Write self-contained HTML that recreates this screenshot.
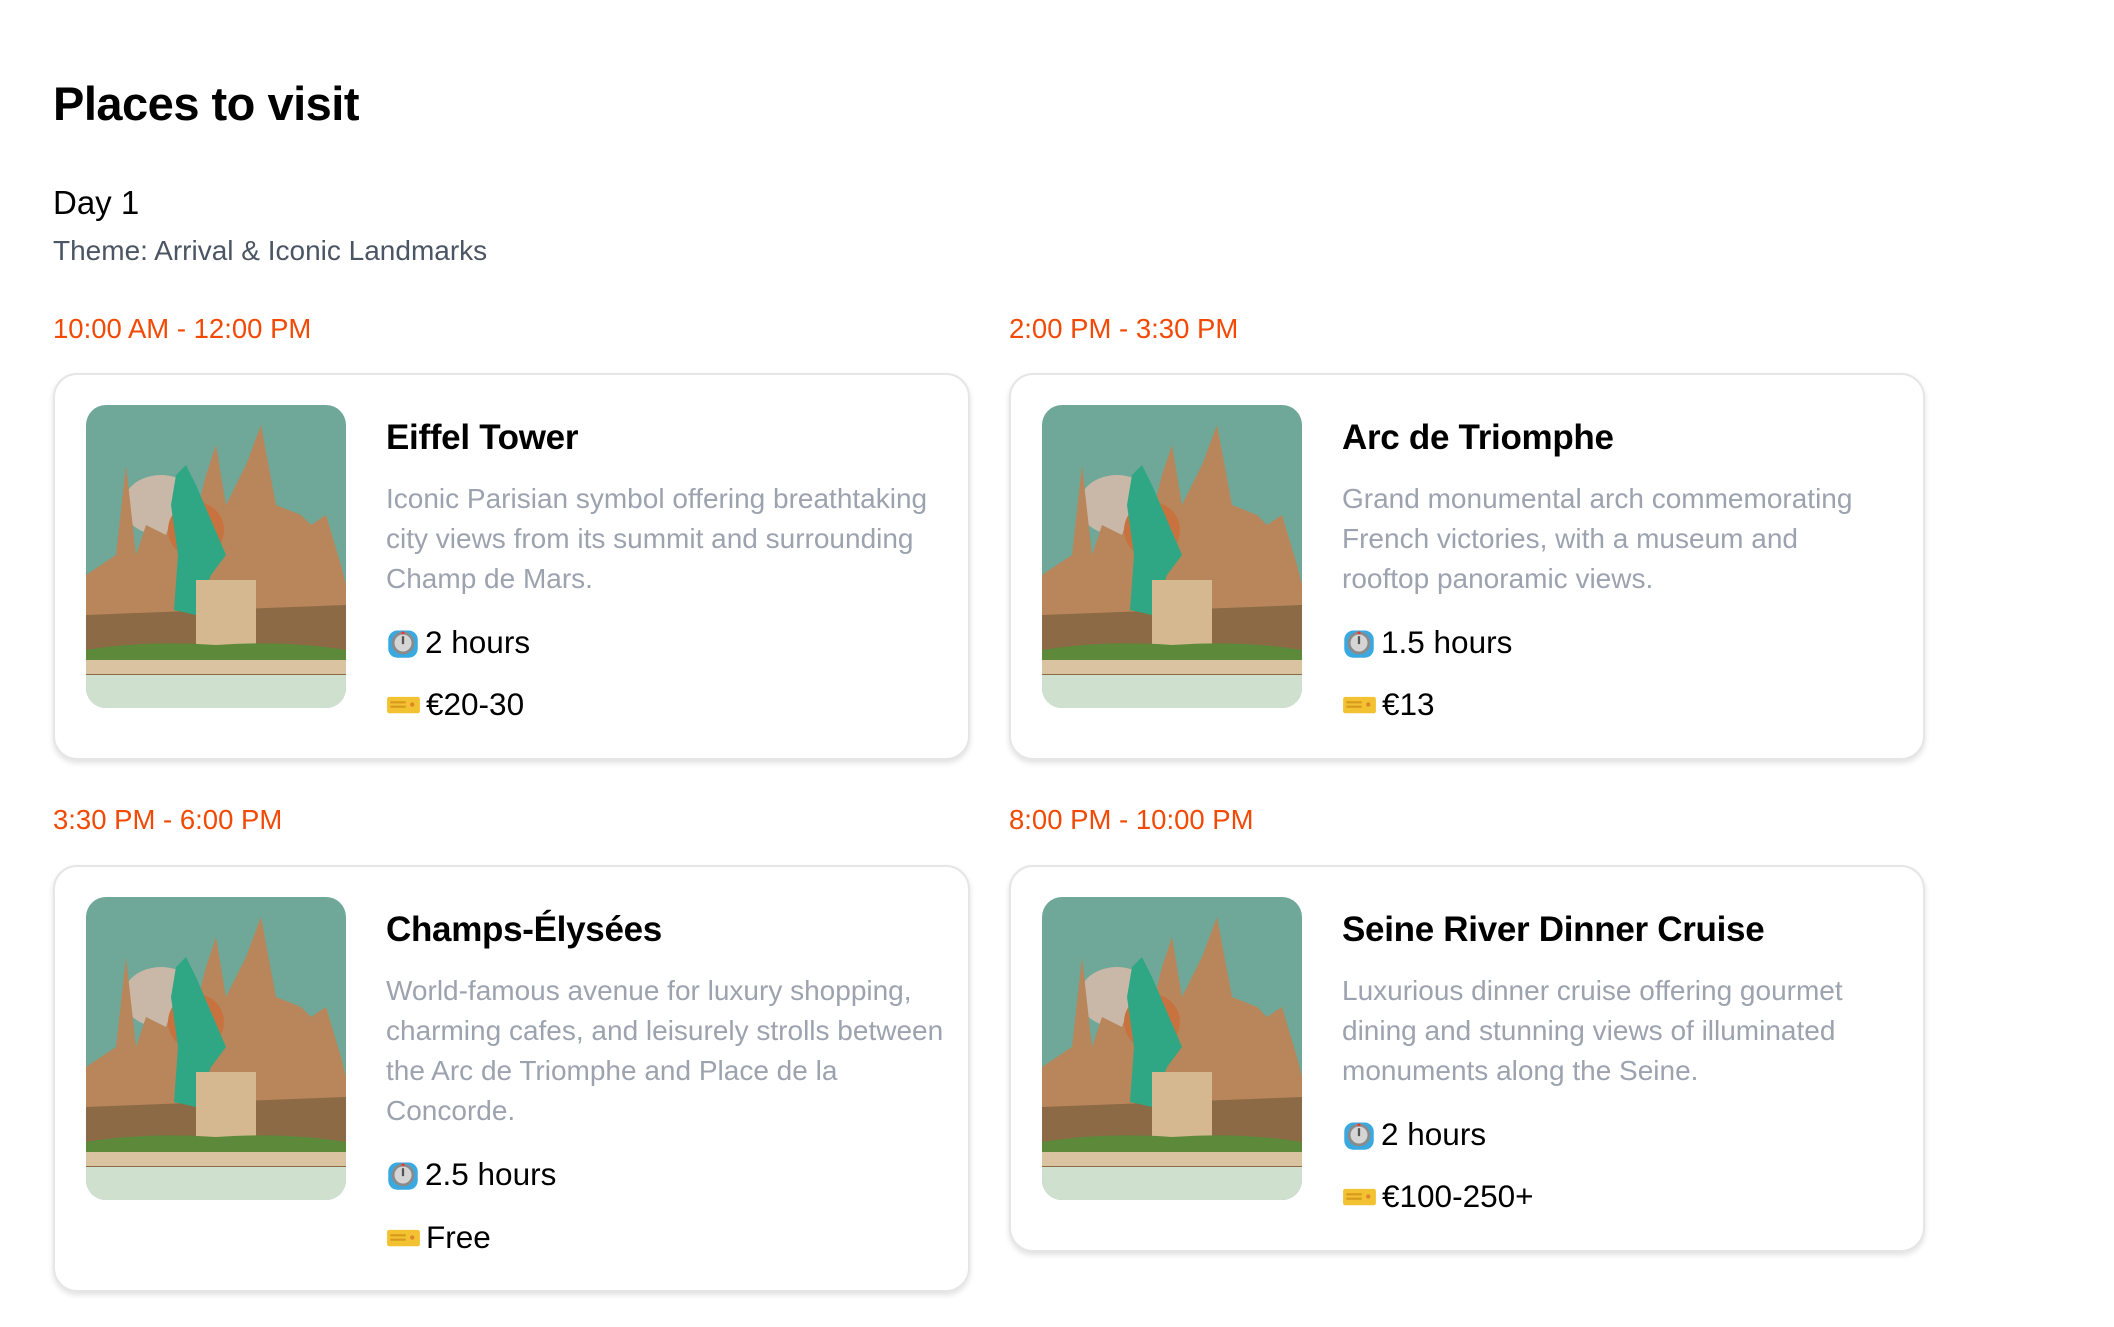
<!DOCTYPE html>
<html><head><meta charset="utf-8"><style>
*{margin:0;padding:0;box-sizing:border-box}
body{width:2114px;height:1327px;background:#fff;position:relative;font-family:"Liberation Sans",sans-serif;overflow:hidden}
.a{position:absolute;white-space:nowrap;line-height:1}
h1{position:absolute;left:53px;top:80px;font-size:47px;font-weight:bold;color:#000;line-height:1;letter-spacing:-0.5px}
.time{color:#f24a05;font-size:27.5px}
.card{position:absolute;width:917px;background:#fff;border:2px solid #e6e6e6;border-radius:24px;box-shadow:0 3px 6px rgba(0,0,0,0.12)}
.img{position:absolute;left:31px;top:30px;width:260px;height:303px;border-radius:20px;overflow:hidden}
.ct{position:absolute;left:331px;top:45px;font-size:35px;font-weight:bold;color:#000;line-height:1;letter-spacing:-0.3px;white-space:nowrap}
.cd{position:absolute;left:331px;top:104px;font-size:28px;line-height:40px;color:#9ca3af;white-space:nowrap}
.meta{position:absolute;left:331px;font-size:31.5px;line-height:1;color:#000;white-space:nowrap;display:flex;align-items:center}
.meta svg{margin-right:5px}
</style></head><body>
<h1>Places to visit</h1>
<div class="a" style="left:53px;top:186px;font-size:33px;color:#000">Day 1</div>
<div class="a" style="left:53px;top:237px;font-size:28px;color:#4b5563">Theme: Arrival &amp; Iconic Landmarks</div>

<div class="a time" style="left:53px;top:315px">10:00 AM - 12:00 PM</div>
<div class="a time" style="left:1009px;top:315px">2:00 PM - 3:30 PM</div>
<div class="a time" style="left:53px;top:806px">3:30 PM - 6:00 PM</div>
<div class="a time" style="left:1009px;top:806px">8:00 PM - 10:00 PM</div>

<div class="card" style="left:53px;top:373px;height:387px">
  <div class="img"><svg width="260" height="303" viewBox="0 0 260 303"><rect width="260" height="303" fill="#6fa898"/><rect y="260" width="260" height="43" fill="#cfe0cf"/><ellipse cx="75" cy="100" rx="38" ry="30" fill="#c9b8a8"/><path d="M0 170 L30 150 L40 60 L50 150 L60 120 L80 130 L95 85 L110 110 L120 70 L130 40 L140 100 L160 60 L175 20 L190 100 L215 110 L225 120 L240 110 L255 160 L260 180 L260 270 L0 270Z" fill="#b8865a"/><path d="M0 210 L260 200 L260 270 L0 270Z" fill="#8b6a45"/><circle cx="110" cy="125" r="28" fill="#c8733f"/><path d="M90 70 L100 60 L110 80 L140 150 L125 170 L110 210 L88 205 L92 150 L85 100Z" fill="#2fa784"/><rect x="110" y="175" width="60" height="70" fill="#d6b890"/><path d="M0 245 Q60 235 130 240 Q200 235 260 245 L260 265 L0 265Z" fill="#5c8a3a"/><rect x="0" y="255" width="260" height="14" fill="#d9c3a0"/></svg></div>
  <div class="ct">Eiffel Tower</div>
  <div class="cd">Iconic Parisian symbol offering breathtaking<br>city views from its summit and surrounding<br>Champ de Mars.</div>
  <div class="meta" style="top:251px"><svg width="34" height="34" viewBox="0 0 30 30"><rect x="2" y="4" width="26" height="24" rx="8" fill="#3aa9e0"/><circle cx="15" cy="15" r="10" fill="#8a8a8a"/><circle cx="15" cy="15" r="7.5" fill="#d5d5d5"/><rect x="14" y="9" width="2" height="7" fill="#555"/><circle cx="15" cy="6" r="1.3" fill="#e33"/></svg>2 hours</div>
  <div class="meta" style="top:313px"><svg width="35" height="33" viewBox="0 0 32 30"><rect x="1" y="8" width="30" height="15" rx="2" fill="#f2c232"/><rect x="4" y="12" width="14" height="2" fill="#d79a1c"/><rect x="4" y="16" width="14" height="2" fill="#d79a1c"/><circle cx="24" cy="15" r="2" fill="#e0852a"/></svg>€20-30</div>
</div>

<div class="card" style="left:1009px;top:373px;height:387px;width:916px">
  <div class="img"><svg width="260" height="303" viewBox="0 0 260 303"><rect width="260" height="303" fill="#6fa898"/><rect y="260" width="260" height="43" fill="#cfe0cf"/><ellipse cx="75" cy="100" rx="38" ry="30" fill="#c9b8a8"/><path d="M0 170 L30 150 L40 60 L50 150 L60 120 L80 130 L95 85 L110 110 L120 70 L130 40 L140 100 L160 60 L175 20 L190 100 L215 110 L225 120 L240 110 L255 160 L260 180 L260 270 L0 270Z" fill="#b8865a"/><path d="M0 210 L260 200 L260 270 L0 270Z" fill="#8b6a45"/><circle cx="110" cy="125" r="28" fill="#c8733f"/><path d="M90 70 L100 60 L110 80 L140 150 L125 170 L110 210 L88 205 L92 150 L85 100Z" fill="#2fa784"/><rect x="110" y="175" width="60" height="70" fill="#d6b890"/><path d="M0 245 Q60 235 130 240 Q200 235 260 245 L260 265 L0 265Z" fill="#5c8a3a"/><rect x="0" y="255" width="260" height="14" fill="#d9c3a0"/></svg></div>
  <div class="ct">Arc de Triomphe</div>
  <div class="cd">Grand monumental arch commemorating<br>French victories, with a museum and<br>rooftop panoramic views.</div>
  <div class="meta" style="top:251px"><svg width="34" height="34" viewBox="0 0 30 30"><rect x="2" y="4" width="26" height="24" rx="8" fill="#3aa9e0"/><circle cx="15" cy="15" r="10" fill="#8a8a8a"/><circle cx="15" cy="15" r="7.5" fill="#d5d5d5"/><rect x="14" y="9" width="2" height="7" fill="#555"/><circle cx="15" cy="6" r="1.3" fill="#e33"/></svg>1.5 hours</div>
  <div class="meta" style="top:313px"><svg width="35" height="33" viewBox="0 0 32 30"><rect x="1" y="8" width="30" height="15" rx="2" fill="#f2c232"/><rect x="4" y="12" width="14" height="2" fill="#d79a1c"/><rect x="4" y="16" width="14" height="2" fill="#d79a1c"/><circle cx="24" cy="15" r="2" fill="#e0852a"/></svg>€13</div>
</div>

<div class="card" style="left:53px;top:865px;height:427px">
  <div class="img"><svg width="260" height="303" viewBox="0 0 260 303"><rect width="260" height="303" fill="#6fa898"/><rect y="260" width="260" height="43" fill="#cfe0cf"/><ellipse cx="75" cy="100" rx="38" ry="30" fill="#c9b8a8"/><path d="M0 170 L30 150 L40 60 L50 150 L60 120 L80 130 L95 85 L110 110 L120 70 L130 40 L140 100 L160 60 L175 20 L190 100 L215 110 L225 120 L240 110 L255 160 L260 180 L260 270 L0 270Z" fill="#b8865a"/><path d="M0 210 L260 200 L260 270 L0 270Z" fill="#8b6a45"/><circle cx="110" cy="125" r="28" fill="#c8733f"/><path d="M90 70 L100 60 L110 80 L140 150 L125 170 L110 210 L88 205 L92 150 L85 100Z" fill="#2fa784"/><rect x="110" y="175" width="60" height="70" fill="#d6b890"/><path d="M0 245 Q60 235 130 240 Q200 235 260 245 L260 265 L0 265Z" fill="#5c8a3a"/><rect x="0" y="255" width="260" height="14" fill="#d9c3a0"/></svg></div>
  <div class="ct">Champs-Élysées</div>
  <div class="cd">World-famous avenue for luxury shopping,<br>charming cafes, and leisurely strolls between<br>the Arc de Triomphe and Place de la<br>Concorde.</div>
  <div class="meta" style="top:291px"><svg width="34" height="34" viewBox="0 0 30 30"><rect x="2" y="4" width="26" height="24" rx="8" fill="#3aa9e0"/><circle cx="15" cy="15" r="10" fill="#8a8a8a"/><circle cx="15" cy="15" r="7.5" fill="#d5d5d5"/><rect x="14" y="9" width="2" height="7" fill="#555"/><circle cx="15" cy="6" r="1.3" fill="#e33"/></svg>2.5 hours</div>
  <div class="meta" style="top:354px"><svg width="35" height="33" viewBox="0 0 32 30"><rect x="1" y="8" width="30" height="15" rx="2" fill="#f2c232"/><rect x="4" y="12" width="14" height="2" fill="#d79a1c"/><rect x="4" y="16" width="14" height="2" fill="#d79a1c"/><circle cx="24" cy="15" r="2" fill="#e0852a"/></svg>Free</div>
</div>

<div class="card" style="left:1009px;top:865px;height:387px;width:916px">
  <div class="img"><svg width="260" height="303" viewBox="0 0 260 303"><rect width="260" height="303" fill="#6fa898"/><rect y="260" width="260" height="43" fill="#cfe0cf"/><ellipse cx="75" cy="100" rx="38" ry="30" fill="#c9b8a8"/><path d="M0 170 L30 150 L40 60 L50 150 L60 120 L80 130 L95 85 L110 110 L120 70 L130 40 L140 100 L160 60 L175 20 L190 100 L215 110 L225 120 L240 110 L255 160 L260 180 L260 270 L0 270Z" fill="#b8865a"/><path d="M0 210 L260 200 L260 270 L0 270Z" fill="#8b6a45"/><circle cx="110" cy="125" r="28" fill="#c8733f"/><path d="M90 70 L100 60 L110 80 L140 150 L125 170 L110 210 L88 205 L92 150 L85 100Z" fill="#2fa784"/><rect x="110" y="175" width="60" height="70" fill="#d6b890"/><path d="M0 245 Q60 235 130 240 Q200 235 260 245 L260 265 L0 265Z" fill="#5c8a3a"/><rect x="0" y="255" width="260" height="14" fill="#d9c3a0"/></svg></div>
  <div class="ct">Seine River Dinner Cruise</div>
  <div class="cd">Luxurious dinner cruise offering gourmet<br>dining and stunning views of illuminated<br>monuments along the Seine.</div>
  <div class="meta" style="top:251px"><svg width="34" height="34" viewBox="0 0 30 30"><rect x="2" y="4" width="26" height="24" rx="8" fill="#3aa9e0"/><circle cx="15" cy="15" r="10" fill="#8a8a8a"/><circle cx="15" cy="15" r="7.5" fill="#d5d5d5"/><rect x="14" y="9" width="2" height="7" fill="#555"/><circle cx="15" cy="6" r="1.3" fill="#e33"/></svg>2 hours</div>
  <div class="meta" style="top:313px"><svg width="35" height="33" viewBox="0 0 32 30"><rect x="1" y="8" width="30" height="15" rx="2" fill="#f2c232"/><rect x="4" y="12" width="14" height="2" fill="#d79a1c"/><rect x="4" y="16" width="14" height="2" fill="#d79a1c"/><circle cx="24" cy="15" r="2" fill="#e0852a"/></svg>€100-250+</div>
</div>
</body></html>
